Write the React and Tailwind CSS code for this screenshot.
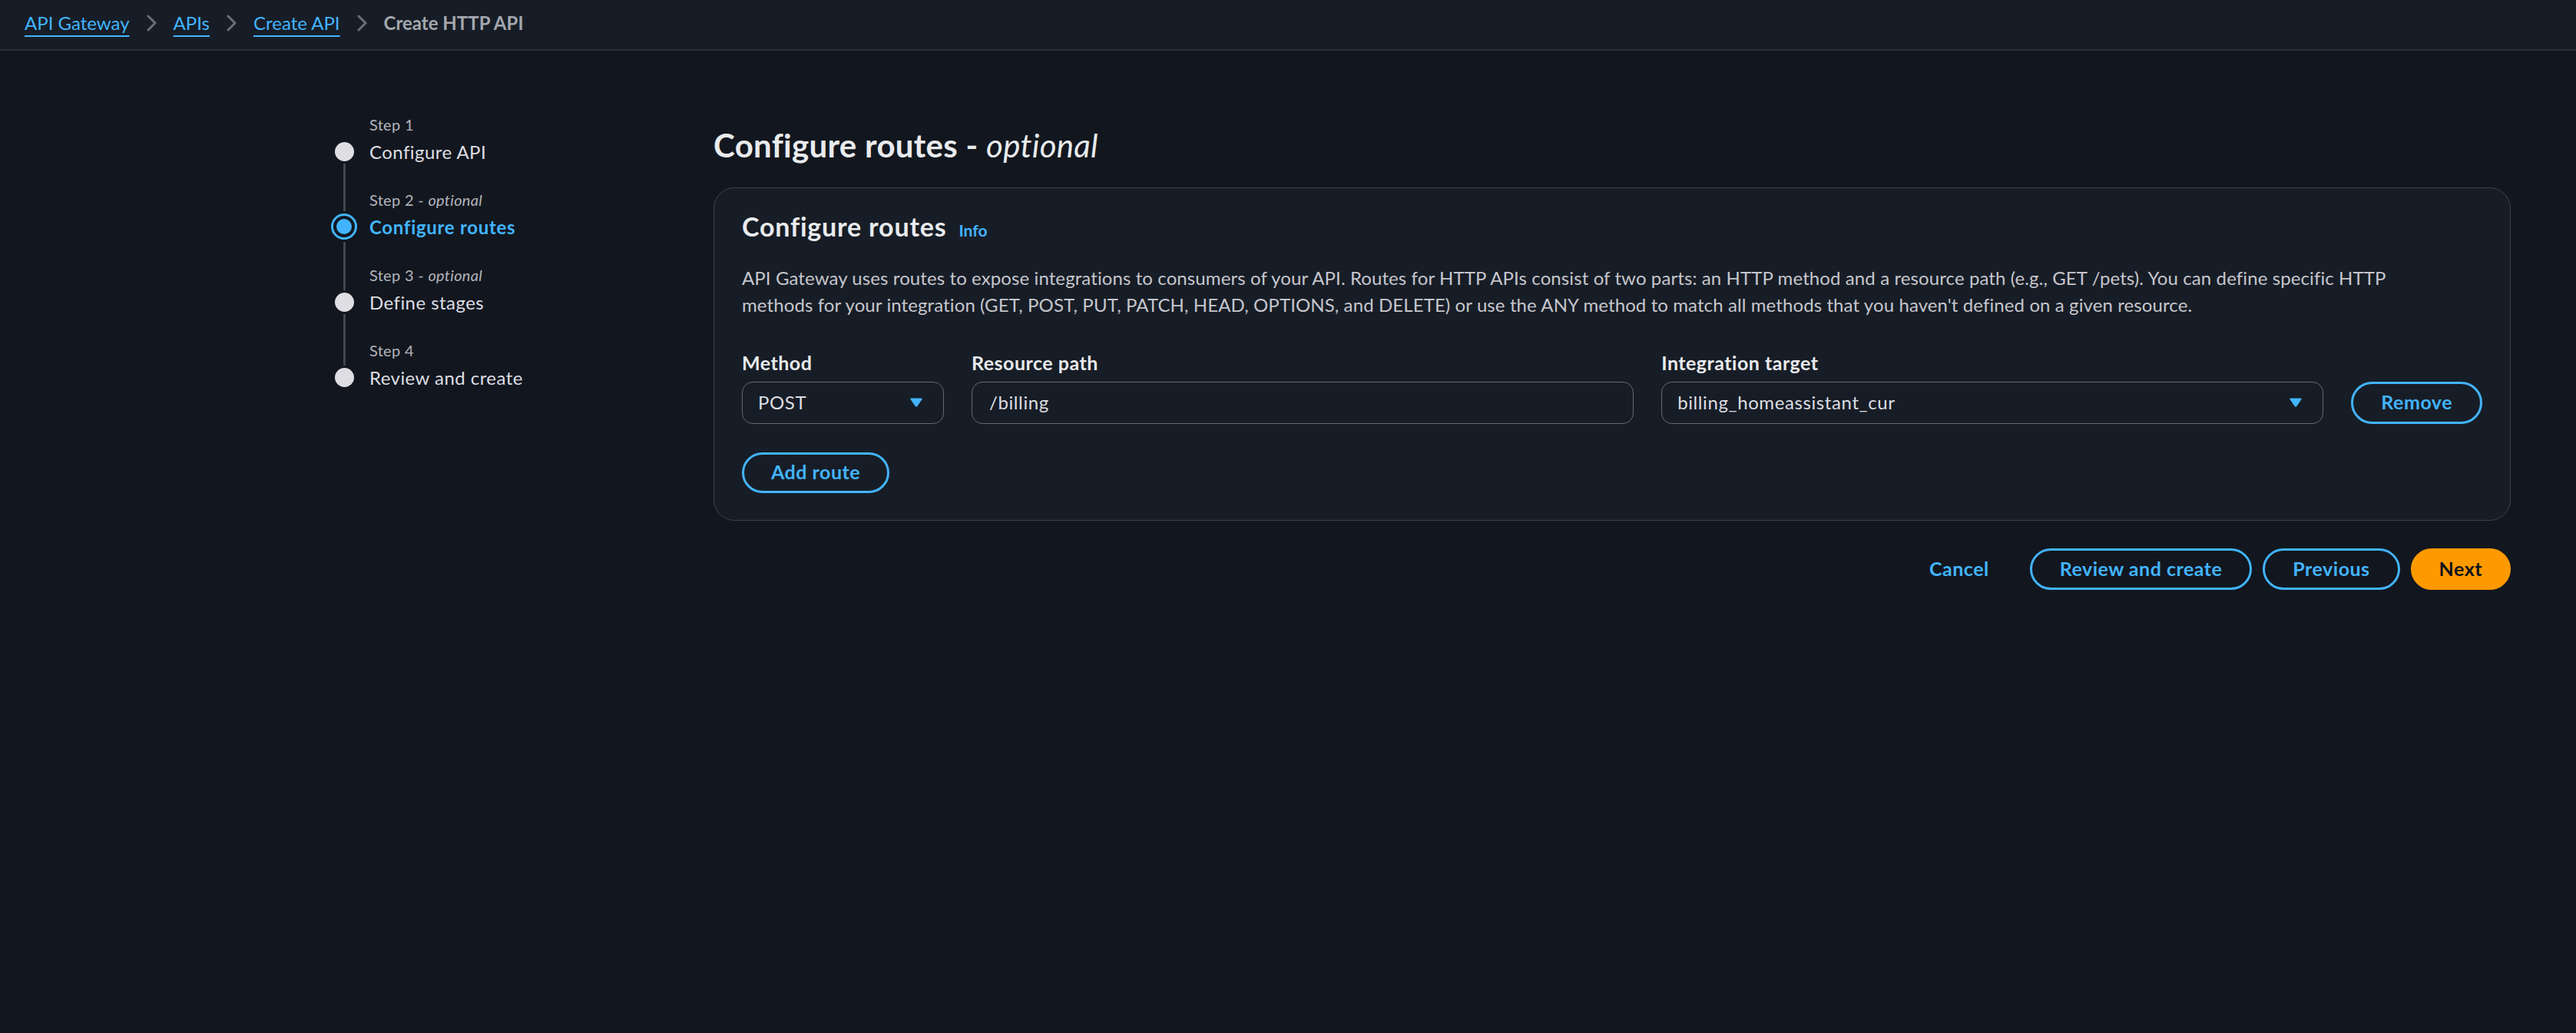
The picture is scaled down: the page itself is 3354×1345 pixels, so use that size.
import React from "react";

function Chevron() {
  return (
    <svg width="13" height="22" viewBox="0 0 13 22" className="shrink-0">
      <path d="M2 2 L11 11 L2 20" fill="none" stroke="#6b6e76" strokeWidth="3" strokeLinecap="round" strokeLinejoin="round" />
    </svg>
  );
}

function Caret() {
  return (
    <svg width="18" height="14" viewBox="0 0 18 14" className="shrink-0">
      <path d="M2.5 1.5 H15.5 Q17.5 1.5 16.3 3.2 L10.3 12 Q9 13.6 7.7 12 L1.7 3.2 Q0.5 1.5 2.5 1.5 Z" fill="#42b4ff" />
    </svg>
  );
}

function Circle() {
  return <div className="w-[25px] h-[25px] rounded-full bg-[#dedee3] shrink-0" />;
}

function ActiveCircle() {
  return (
    <div className="w-[34px] h-[34px] rounded-full border-[3px] border-[#42b4ff] flex items-center justify-center shrink-0">
      <div className="w-[20px] h-[20px] rounded-full bg-[#42b4ff]" />
    </div>
  );
}

function Line({ h }) {
  return <div className={`w-[3px] bg-[#414750] my-[3px] ${h}`} />;
}

const steps = [
  { label: "Step 1", optional: false, title: "Configure API", active: false },
  { label: "Step 2", optional: true, title: "Configure routes", active: true },
  { label: "Step 3", optional: true, title: "Define stages", active: false },
  { label: "Step 4", optional: false, title: "Review and create", active: false },
];

const btnText = "text-[25px] font-bold tracking-[0.5px]";

export default function App() {
  return (
    <div className="min-h-[1345px] bg-[#12171f] font-['Lato','Noto_Sans',sans-serif] text-[#c6c6cd]">
      <header className="h-[66px] bg-[#171d26] border-b-2 border-[#2a313b] flex items-center pl-[32px] pb-[4px] gap-[22px] text-[24px]">
        <a className="text-[#42b4ff] underline decoration-2 underline-offset-[7px]">API Gateway</a>
        <Chevron />
        <a className="text-[#42b4ff] underline decoration-2 underline-offset-[7px]">APIs</a>
        <Chevron />
        <a className="text-[#42b4ff] underline decoration-2 underline-offset-[7px]">Create API</a>
        <Chevron />
        <span className="text-[#a4a7ae] font-bold">Create HTTP API</span>
      </header>

      <div className="flex pl-[431px] pr-[85px]">
        <nav className="w-[498px] shrink-0 pt-[79px] flex">
          <div className="w-[34px] flex flex-col items-center pt-[40px]">
            <Circle />
            <Line h="h-[62px]" />
            <ActiveCircle />
            <Line h="h-[63px]" />
            <Circle />
            <Line h="h-[67px]" />
            <Circle />
          </div>
          <div className="ml-[16px] flex flex-col">
            {steps.map((s) => (
              <div key={s.label} className="mb-[28px]">
                <div className="h-[35px] leading-[35px] text-[20px] tracking-[0.3px] text-[#b4b4bb]">
                  {s.label}
                  {s.optional && (
                    <>
                      {" - "}
                      <i>optional</i>
                    </>
                  )}
                </div>
                <div
                  className={`h-[35px] leading-[35px] text-[24px] ${
                    s.active
                      ? "font-bold text-[#42b4ff] tracking-[0.7px]"
                      : "text-[#dedee3] tracking-[0.45px]"
                  }`}
                >
                  {s.title}
                </div>
              </div>
            ))}
          </div>
        </nav>

        <main className="flex-1 pt-[98px]">
          <h1 className="text-[42px] leading-[50px] font-bold tracking-[0.3px] text-[#e9ebed]">
            Configure routes - <i className="font-normal">optional</i>
          </h1>

          <section className="mt-[30px] rounded-[27px] border border-[#3c414a] bg-[#171d26] px-[36px] pt-[30px] pb-[35px]">
            <div className="flex items-baseline gap-[16px]">
              <h2 className="text-[34px] leading-[40px] font-bold tracking-[0.8px] text-[#e9ebed]">Configure routes</h2>
              <span className="text-[21px] font-bold text-[#42b4ff]">Info</span>
            </div>
            <p className="mt-[28px] text-[24px] leading-[35px] tracking-[0.1px] text-[#c6c6cd]">
              <span className="block whitespace-nowrap">
                API Gateway uses routes to expose integrations to consumers of your API. Routes for HTTP APIs consist of two parts: an HTTP method and a resource path (e.g., GET /pets). You can define specific HTTP
              </span>
              <span className="block whitespace-nowrap">
                methods for your integration (GET, POST, PUT, PATCH, HEAD, OPTIONS, and DELETE) or use the ANY method to match all methods that you haven't defined on a given resource.
              </span>
            </p>

            <div className="mt-[41px] grid grid-cols-[263px_1fr_1fr_auto] gap-x-[36px] gap-y-[7px]">
              <div className="leading-[35px] text-[25px] font-bold tracking-[0.5px] text-[#e9ebed]">Method</div>
              <div className="leading-[35px] text-[25px] font-bold tracking-[0.5px] text-[#e9ebed]">Resource path</div>
              <div className="leading-[35px] text-[25px] font-bold tracking-[0.5px] text-[#e9ebed]">Integration target</div>
              <div />

              <div className="h-[55px] rounded-[14px] border border-[#656871] flex items-center justify-between pl-[20px] pr-[26px] text-[24px] tracking-[0.6px] text-[#dedee3]">
                <span>POST</span>
                <Caret />
              </div>
              <div className="h-[55px] rounded-[14px] border border-[#656871] flex items-center pl-[22px] pr-[20px] text-[24px] tracking-[0.6px] text-[#dedee3]">
                <span>/billing</span>
              </div>
              <div className="h-[55px] rounded-[14px] border border-[#656871] flex items-center justify-between pl-[20px] pr-[26px] text-[24px] tracking-[0.6px] text-[#dedee3]">
                <span>billing_homeassistant_cur</span>
                <Caret />
              </div>
              <button className={`h-[55px] rounded-full border-[3px] border-[#42b4ff] px-[36px] ${btnText} text-[#42b4ff]`}>
                Remove
              </button>
            </div>

            <button className={`mt-[37px] h-[53px] rounded-full border-[3px] border-[#42b4ff] px-[35px] ${btnText} text-[#42b4ff]`}>
              Add route
            </button>
          </section>

          <div className="mt-[36px] flex justify-end gap-[14px]">
            <button className={`h-[54px] rounded-full border-[3px] border-transparent px-[36px] ${btnText} text-[#42b4ff]`}>
              Cancel
            </button>
            <button className={`h-[54px] rounded-full border-[3px] border-[#42b4ff] px-[36px] ${btnText} text-[#42b4ff]`}>
              Review and create
            </button>
            <button className={`h-[54px] rounded-full border-[3px] border-[#42b4ff] px-[36px] ${btnText} text-[#42b4ff]`}>
              Previous
            </button>
            <button className={`h-[54px] rounded-full border-[3px] border-[#ff9900] bg-[#ff9900] px-[34px] ${btnText} text-[#0f141a]`}>
              Next
            </button>
          </div>
        </main>
      </div>
    </div>
  );
}
